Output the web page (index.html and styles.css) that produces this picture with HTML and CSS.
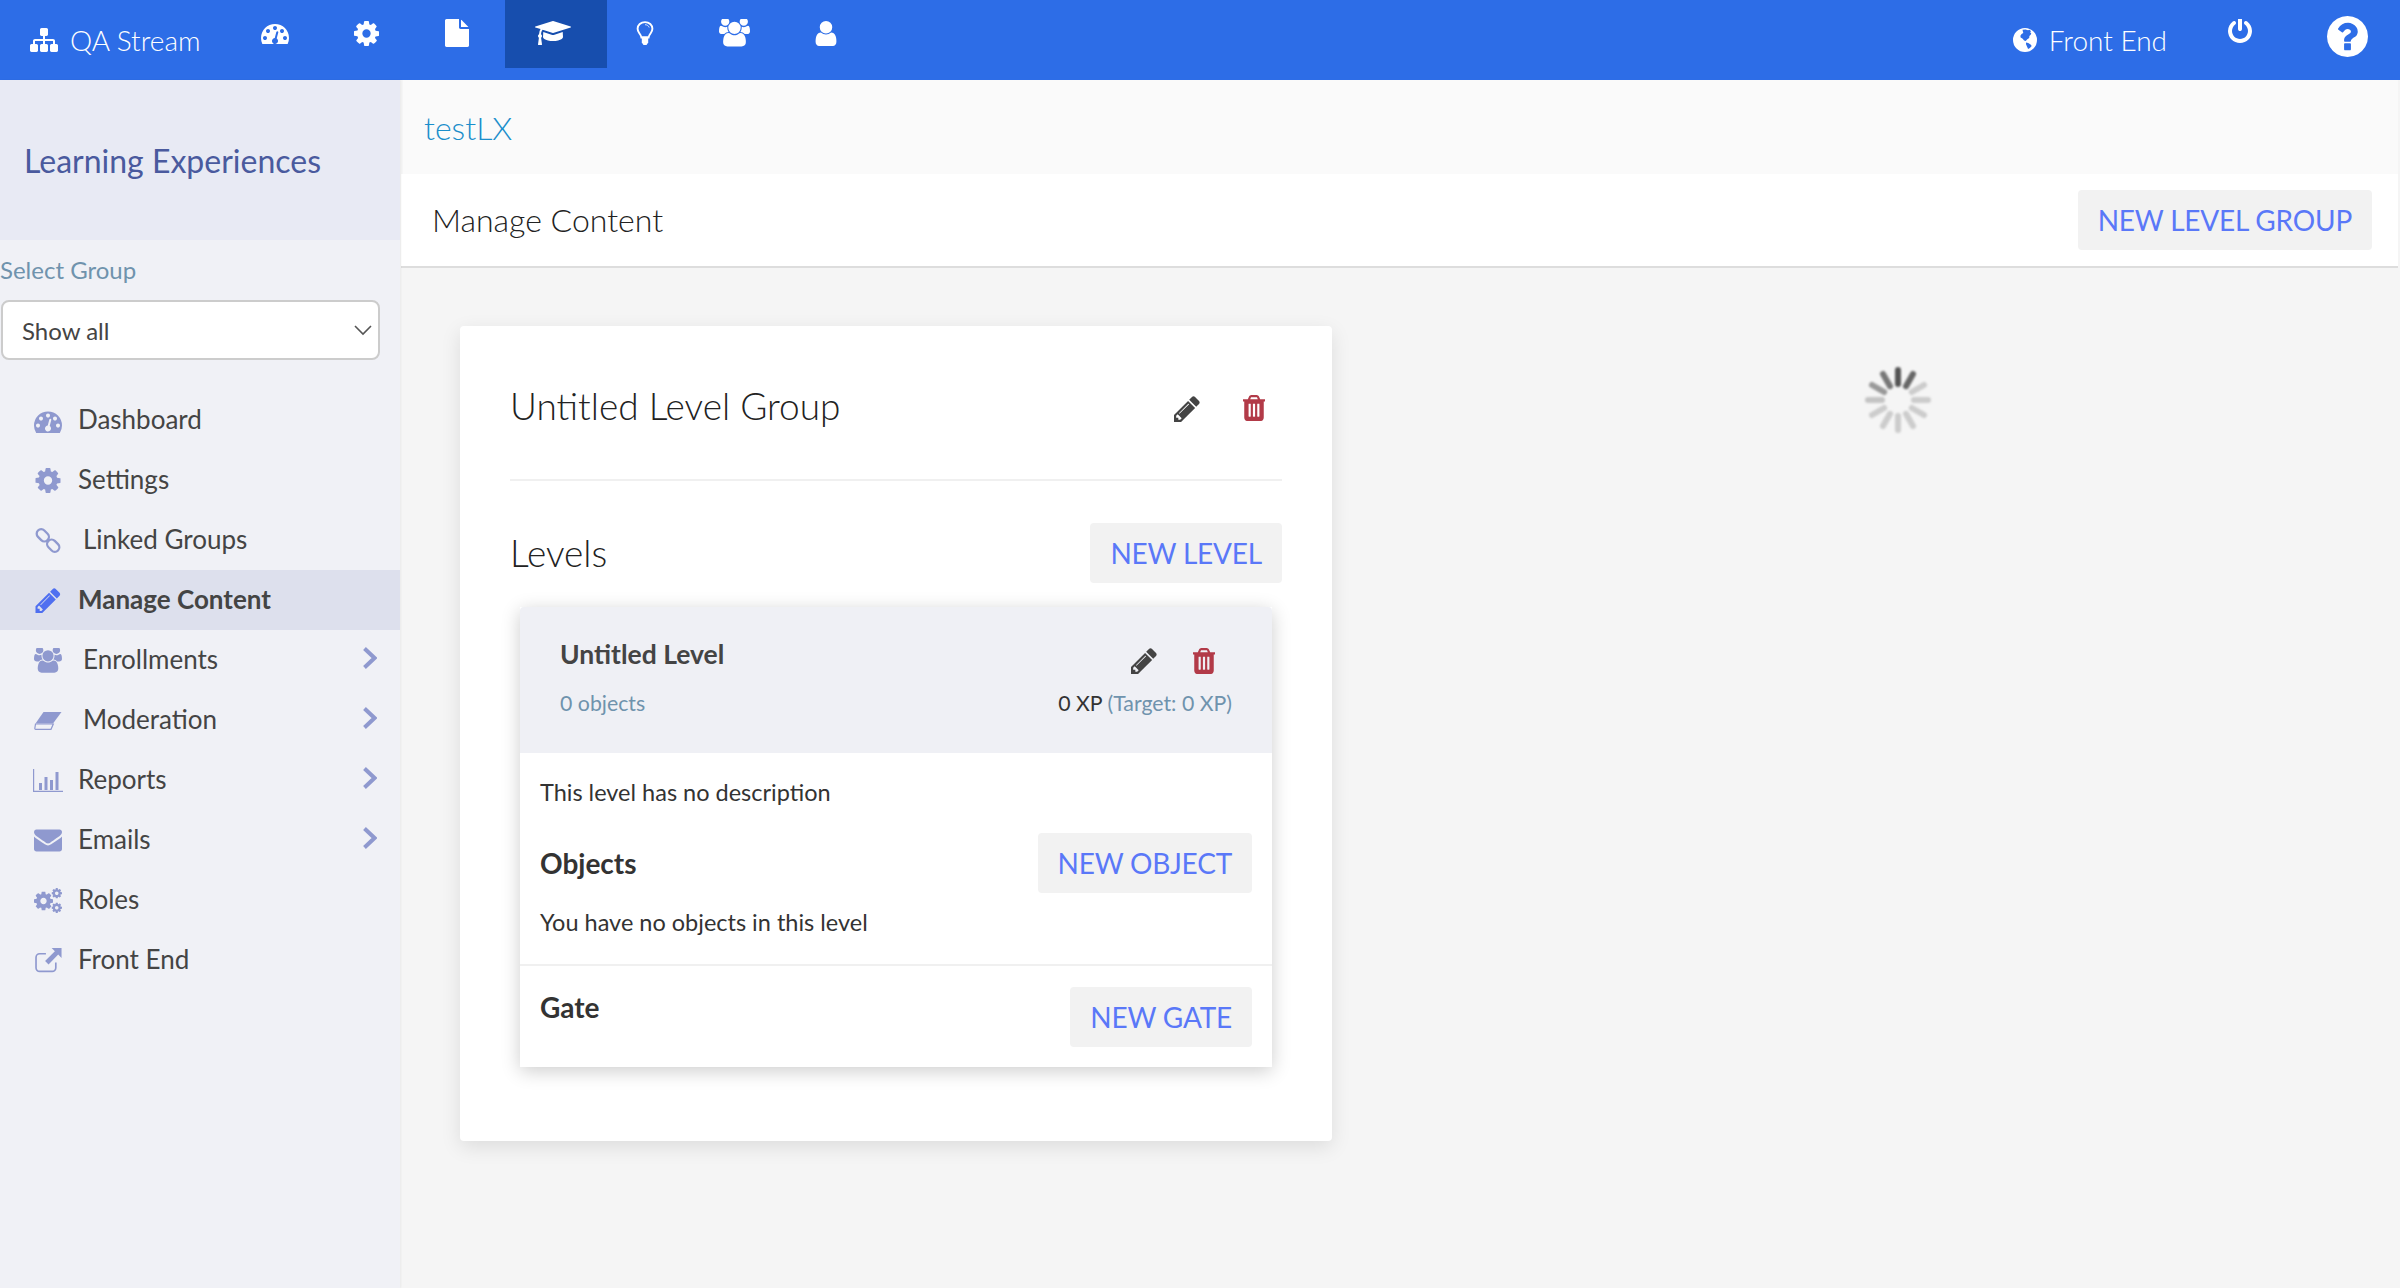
FILE: index.html
```html
<!DOCTYPE html>
<html lang="en">
<head>
    <meta charset="UTF-8">
    <title>Manage Content</title>
    <link rel="stylesheet" href="styles.css">
</head>
<body>
    <!-- Icon sprite -->
    <svg class="sprite" xmlns="http://www.w3.org/2000/svg">
        <symbol id="i-sitemap" viewBox="0 0 1792 1792"><path d="M1792 1248v320q0 40-28 68t-68 28h-320q-40 0-68-28t-28-68v-320q0-40 28-68t68-28h96v-192h-512v192h96q40 0 68 28t28 68v320q0 40-28 68t-68 28h-320q-40 0-68-28t-28-68v-320q0-40 28-68t68-28h96v-192h-512v192h96q40 0 68 28t28 68v320q0 40-28 68t-68 28h-320q-40 0-68-28t-28-68v-320q0-40 28-68t68-28h96v-192q0-52 38-90t90-38h512v-192h-96q-40 0-68-28t-28-68v-320q0-40 28-68t68-28h320q40 0 68 28t28 68v320q0 40-28 68t-68 28h-96v192h512q52 0 90 38t38 90v192h96q40 0 68 28t28 68z"/></symbol>
        <symbol id="i-dashboard" viewBox="0 128 1792 1408"><path fill-rule="evenodd" d="M384 1152q0-53-37.5-90.5t-90.5-37.5-90.5 37.5-37.5 90.5 37.5 90.5 90.5 37.5 90.5-37.5 37.5-90.5zm192-448q0-53-37.5-90.5t-90.5-37.5-90.5 37.5-37.5 90.5 37.5 90.5 90.5 37.5 90.5-37.5 37.5-90.5zm428 481l101-382q6-26-7.5-48.5t-38.5-29.5-48 6.5-30 39.5l-101 382q-60 5-107 43.5t-63 98.5q-20 77 20 146t117 89 146-20 89-117q16-60-6-117t-72-91zm660-33q0-53-37.5-90.5t-90.5-37.5-90.5 37.5-37.5 90.5 37.5 90.5 90.5 37.5 90.5-37.5 37.5-90.5zm-640-640q0-53-37.5-90.5t-90.5-37.5-90.5 37.5-37.5 90.5 37.5 90.5 90.5 37.5 90.5-37.5 37.5-90.5zm448 192q0-53-37.5-90.5t-90.5-37.5-90.5 37.5-37.5 90.5 37.5 90.5 90.5 37.5 90.5-37.5 37.5-90.5zm320 448q0 261-141 483-19 29-54 29h-1402q-35 0-54-29-141-221-141-483 0-182 71-348t191-286 286-191 348-71 348 71 286 191 191 286 71 348z"/></symbol>
        <symbol id="i-cog" viewBox="128 128 1536 1536"><path d="M1152 896q0-106-75-181t-181-75-181 75-75 181 75 181 181 75 181-75 75-181zm512-109v222q0 12-8 23t-20 13l-185 28q-19 54-39 91 35 50 107 138 10 12 10 25t-9 23q-27 37-99 108t-94 71q-12 0-26-9l-138-108q-44 23-91 38-16 136-29 186-7 28-36 28h-222q-14 0-24.5-8.5t-11.5-21.5l-28-184q-49-16-90-37l-141 107q-10 9-25 9-14 0-25-11-126-114-165-168-7-10-7-23 0-12 8-23 15-21 51-66.5t54-70.5q-27-50-41-99l-183-27q-13-2-21-12.5t-8-23.5v-222q0-12 8-23t19-13l186-28q14-46 39-92-40-57-107-138-10-12-10-24 0-10 9-23 26-36 98.5-107.5t94.5-71.5q13 0 26 10l138 107q44-23 91-38 16-136 29-186 7-28 36-28h222q14 0 24.5 8.5t11.5 21.5l28 184q49 16 90 37l142-107q9-9 24-9 13 0 25 10 129 119 165 170 7 8 7 22 0 12-8 23-15 21-51 66.5t-54 70.5q26 50 41 98l183 28q13 2 21 12.5t8 23.5z"/></symbol>
        <symbol id="i-file" viewBox="128 0 1536 1792"><path d="M1152 512v-472q22 14 36 28l408 408q14 14 28 36h-472zm-128 32q0 40 28 68t68 28h544v1056q0 40-28 68t-68 28h-1344q-40 0-68-28t-28-68v-1600q0-40 28-68t68-28h800v544z"/></symbol>
        <symbol id="i-cap" viewBox="0 128 2304 1536"><path d="M1774 836l18 316q4 69-82 128t-235 93.5-323 34.5-323-34.5-235-93.5-82-128l18-316 574 181q22 7 48 7t48-7zm530-324q0 23-22 31l-1120 352q-4 1-10 1t-10-1l-652-206q-43 34-71 111.5t-34 178.5q63 36 63 109 0 69-58 107l58 433q2 14-8 25-9 11-24 11h-192q-15 0-24-11-10-11-8-25l58-433q-58-38-58-107 0-73 65-111 11-207 98-330l-333-104q-22-8-22-31t22-31l1120-352q4-1 10-1t10 1l1120 352q22 8 22 31z"/></symbol>
        <symbol id="i-bulb" viewBox="0 0 18 24"><path d="M9 1.100c-4.200 0-7.400 3-7.400 6.700 0 1.900.8 3.200 1.700 4.400.9 1.200 1.900 2.500 2.100 4.300h7.200c.2-1.800 1.200-3.100 2.100-4.300.9-1.200 1.700-2.500 1.700-4.400 0-3.700-3.200-6.700-7.400-6.700z" fill="none" stroke="currentColor" stroke-width="1.900"/><path d="M5.800 15.500h6.400v6l-1.700 2.400h-3l-1.700-2.400z"/><path d="M9 3.700c2 0 3.700 1.200 4.200 2.800" fill="none" stroke="currentColor" stroke-width=".8"/></symbol>
        <symbol id="i-users" viewBox="0 128 1920 1664"><path d="M593 896q-162 5-265 128h-134q-82 0-138-40.500t-56-118.500q0-353 124-353 6 0 43.500 21t97.500 42.500 119 21.500q67 0 133-23-5 37-5 66 0 139 81 256zm1071 637q0 120-73 189.500t-194 69.500h-874q-121 0-194-69.500t-73-189.500q0-53 3.500-103.500t14-109 26.500-108.500 43-97.500 62-81 85.500-53.500 111.500-20q10 0 43 21.500t73 48 107 48 135 21.500 135-21.500 107-48 73-48 43-21.500q61 0 111.500 20t85.500 53.500 62 81 43 97.500 26.500 108.500 14 109 3.500 103.500zm-1024-1277q0 106-75 181t-181 75-181-75-75-181 75-181 181-75 181 75 75 181zm704 384q0 159-112.500 271.500t-271.500 112.500-271.500-112.500-112.500-271.500 112.500-271.500 271.500-112.500 271.500 112.500 112.500 271.500zm576 225q0 78-56 118.500t-138 40.500h-134q-103-123-265-128 81-117 81-256 0-29-5-66 66 23 133 23 59 0 119-21.500t97.500-42.500 43.500-21q124 0 124 353zm-128-609q0 106-75 181t-181 75-181-75-75-181 75-181 181-75 181 75 75 181z"/></symbol>
        <symbol id="i-user" viewBox="256 128 1280 1536"><path d="M1536 1399q0 109-62.500 187t-150.500 78h-854q-88 0-150.500-78t-62.500-187q0-85 8.500-160.500t31.500-152 58.500-131 94-89 134.500-34.500q131 128 313 128t313-128q76 0 134.500 34.500t94 89 58.500 131 31.500 152 8.500 160.500zm-256-887q0 159-112.500 271.500t-271.500 112.500-271.500-112.500-112.500-271.500 112.500-271.500 271.500-112.500 271.500 112.500 112.500 271.500z"/></symbol>
        <symbol id="i-globe" viewBox="0 0 24 24"><path fill-rule="evenodd" d="M12 0a12 12 0 1 0 0 24 12 12 0 0 0 0-24zM9.500 1.800l3-.3 2.500.8 1.500-.6 1.600 1.500-1.200 1 1.400.7-.6 1.800-1.300 1.200-.2 2.200-1.900 1.100-1.600 1.800-1.600-.5-1.700-2-1.800-1.100-.2-1.700 1.200-1.800 1.700-.8-.4-1.700zM13 14.500l2.200.4 2.400 1.500 1.100 1.700-1.800 2-1.800.9-1-2.200-1.100-2.500z"/></symbol>
        <symbol id="i-power" viewBox="128 128 1536 1664"><path d="M1664 896q0 156-61 298t-164 245-245 164-298 61-298-61-245-164-164-245-61-298q0-182 80.500-343t226.500-270q43-32 95.500-25t83.500 50q32 42 24.500 94.500t-49.500 84.500q-98 74-151.500 181t-53.500 228q0 104 40.500 198.500t109.500 163.500 163.500 109.500 198.500 40.500 198.500-40.500 163.500-109.500 109.500-163.500 40.500-198.500q0-121-53.500-228t-151.500-181q-42-32-49.500-84.500t24.500-94.500q31-43 84-50t95 25q146 109 226.500 270t80.500 343zm-640-768v640q0 52-38 90t-90 38-90-38-38-90v-640q0-52 38-90t90-38 90 38 38 90z"/></symbol>
        <symbol id="i-help" viewBox="128 128 1536 1536"><path d="M1024 1376v-192q0-14-9-23t-23-9h-192q-14 0-23 9t-9 23v192q0 14 9 23t23 9h192q14 0 23-9t9-23zm256-672q0-88-55.500-163t-138.500-116-170-41q-243 0-371 213-15 24 8 42l132 100q7 6 19 6 16 0 25-12 53-68 86-92 34-24 86-24 48 0 85.500 26t37.500 59q0 38-20 61t-68 45q-63 28-115.500 86.500t-52.500 125.500v36q0 14 9 23t23 9h192q14 0 23-9t9-23q0-19 21.500-49.500t54.500-49.500q32-18 49-28.500t46-35 44.500-48 28-60.500 12.500-81zm384 192q0 209-103 385.500t-279.500 279.500-385.500 103-385.500-103-279.500-279.500-103-385.500 103-385.500 279.500-279.500 385.500-103 385.500 103 279.500 279.500 103 385.500z"/></symbol>
        <symbol id="i-pencil" viewBox="128 128 1536 1536"><path d="M491 1536l91-91-235-235-91 91v107h128v128h107zm523-928q0-22-22-22-10 0-17 7l-542 542q-7 7-7 17 0 22 22 22 10 0 17-7l542-542q7-7 7-17zm-54-192l416 416-832 832h-416v-416zm683 96q0 53-37 90l-166 166-416-416 166-165q36-38 90-38 53 0 91 38l235 234q37 39 37 91z"/></symbol>
        <symbol id="i-trash" viewBox="256 128 1280 1536"><path d="M704 1376v-704q0-14-9-23t-23-9h-64q-14 0-23 9t-9 23v704q0 14 9 23t23 9h64q14 0 23-9t9-23zm256 0v-704q0-14-9-23t-23-9h-64q-14 0-23 9t-9 23v704q0 14 9 23t23 9h64q14 0 23-9t9-23zm256 0v-704q0-14-9-23t-23-9h-64q-14 0-23 9t-9 23v704q0 14 9 23t23 9h64q14 0 23-9t9-23zm-544-992h448l-48-117q-7-9-17-11h-317q-10 2-17 11zm928 32v64q0 14-9 23t-23 9h-96v948q0 83-47 143.500t-113 60.500h-832q-66 0-113-58.500t-47-141.500v-952h-96q-14 0-23-9t-9-23v-64q0-14 9-23t23-9h309l70-167q15-37 54-63t79-26h320q40 0 79 26t54 63l70 167h309q14 0 23 9t9 23z"/></symbol>
        <symbol id="i-link" viewBox="0 0 24 24"><g fill="none" stroke="currentColor" stroke-width="2.200"><rect x="0.500" y="2.700" width="13" height="8.600" rx="4.300" transform="rotate(45 7 7)"/><rect x="10.500" y="12.700" width="13" height="8.600" rx="4.300" transform="rotate(45 17 17)"/></g></symbol>
        <symbol id="i-eraser" viewBox="0 0 28 19"><path d="M9.500 1H27.500L19 12.500H1.500z"/><path d="M1.500 13l-.7 4.500c0 .5.300.8.800.8H17l2.300-5.300z" fill="none" stroke="currentColor" stroke-width="1.200"/></symbol>
        <symbol id="i-chart" viewBox="0 0 30 23"><path d="M.6 0v22.300H30" fill="none" stroke="currentColor" stroke-width="1.200"/><path d="M6 14h3v7H6zM11.500 8h3v13h-3zM17 11h3v10h-3zM22.500 3h3v18h-3z"/></symbol>
        <symbol id="i-envelope" viewBox="0 256 1792 1408"><path d="M1792 710v794q0 66-47 113t-113 47h-1472q-66 0-113-47t-47-113v-794q44 49 101 87 362 246 497 345 57 42 92.500 65.500t94.500 48 110 24.500h2q51 0 110-24.500t94.500-48 92.500-65.500q170-123 498-345 57-39 100-87zm0-294q0 79-49 151t-122 123q-376 261-468 325-10 7-42.500 30.500t-54 38-52 32.500-57.500 27-50 9h-2q-23 0-50-9t-57.500-27-52-32.500-54-38-42.500-30.500q-91-64-262-182.500t-205-142.500q-62-42-117-115.500t-55-136.500q0-78 41.500-130t118.500-52h1472q65 0 112.500 47t47.500 113z"/></symbol>
        <symbol id="i-external" viewBox="0 0 26 24"><path d="M11 5.500H5a3.500 3.500 0 0 0-3.500 3.500v10A3.500 3.500 0 0 0 5 22.500h12a3.500 3.500 0 0 0 3.500-3.500v-5" fill="none" stroke="currentColor" stroke-width="1.600"/><path d="M16.500 0H26v9.500l-3.200-3.200-9.300 9.500-3.300-3.300 9.400-9.300z"/></symbol>
        <symbol id="i-chevron" viewBox="0 0 15 24"><path d="M2.500 2.500L12.500 12 2.500 21.500" fill="none" stroke="currentColor" stroke-width="4"/></symbol>
    </svg>

    <header class="topbar">
        <a class="brand">
            <svg class="ic-brand"><use href="#i-sitemap"/></svg>
            <span>QA Stream</span>
        </a>
        <nav class="topnav">
            <a class="topnav-item w91"><svg class="ic-dash"><use href="#i-dashboard"/></svg></a>
            <a class="topnav-item w91"><svg class="ic-gear"><use href="#i-cog"/></svg></a>
            <a class="topnav-item w93"><svg class="ic-file"><use href="#i-file"/></svg></a>
            <a class="topnav-item active"><svg class="ic-cap"><use href="#i-cap"/></svg></a>
            <a class="topnav-item w83"><svg class="ic-bulb"><use href="#i-bulb"/></svg></a>
            <a class="topnav-item w90"><svg class="ic-users"><use href="#i-users"/></svg></a>
            <a class="topnav-item w90"><svg class="ic-user"><use href="#i-user"/></svg></a>
        </nav>
        <div class="topbar-right">
            <a class="front-end">
                <svg class="ic-globe"><use href="#i-globe"/></svg>
                <span>Front End</span>
            </a>
            <svg class="ic-power"><use href="#i-power"/></svg>
            <svg class="ic-help"><use href="#i-help"/></svg>
        </div>
    </header>

    <div class="layout">
        <aside class="sidebar">
            <div class="sidebar-head">
                <h2>Learning Experiences</h2>
            </div>
            <div class="group-select">
                <label>Select Group</label>
                <div class="select-box">
                    <span>Show all</span>
                    <svg class="select-arrow" viewBox="0 0 20 12"><path d="M2 2l8 8 8-8" fill="none" stroke="#555" stroke-width="1.600"/></svg>
                </div>
            </div>
            <ul class="menu">
                <li><svg class="menu-icon"><use href="#i-dashboard"/></svg><span>Dashboard</span></li>
                <li><svg class="menu-icon"><use href="#i-cog"/></svg><span>Settings</span></li>
                <li class="wide"><svg class="menu-icon"><use href="#i-link"/></svg><span>Linked Groups</span></li>
                <li class="current"><svg class="menu-icon"><use href="#i-pencil"/></svg><span>Manage Content</span></li>
                <li class="wide"><svg class="menu-icon"><use href="#i-users"/></svg><span>Enrollments</span><svg class="menu-arrow"><use href="#i-chevron"/></svg></li>
                <li class="wide"><svg class="menu-icon"><use href="#i-eraser"/></svg><span>Moderation</span><svg class="menu-arrow"><use href="#i-chevron"/></svg></li>
                <li><svg class="menu-icon wider"><use href="#i-chart"/></svg><span>Reports</span><svg class="menu-arrow"><use href="#i-chevron"/></svg></li>
                <li><svg class="menu-icon"><use href="#i-envelope"/></svg><span>Emails</span><svg class="menu-arrow"><use href="#i-chevron"/></svg></li>
                <li>
                    <svg class="menu-icon" viewBox="0 0 28 25">
                        <use href="#i-cog" x="0" y="3.500" width="19" height="19"/>
                        <use href="#i-cog" x="17.500" y="0" width="10.500" height="10.500"/>
                        <use href="#i-cog" x="17.500" y="14.500" width="10.500" height="10.500"/>
                    </svg>
                    <span>Roles</span>
                </li>
                <li><svg class="menu-icon"><use href="#i-external"/></svg><span>Front End</span></li>
            </ul>
        </aside>

        <main class="main">
            <div class="breadcrumb"><a>testLX</a></div>
            <div class="page-head">
                <h1>Manage Content</h1>
                <button class="btn">NEW LEVEL GROUP</button>
            </div>

            <div class="content">
                <section class="group-card">
                    <div class="group-title">
                        <h2>Untitled Level Group</h2>
                        <svg class="ic-edit"><use href="#i-pencil"/></svg>
                        <svg class="ic-delete"><use href="#i-trash"/></svg>
                    </div>
                    <hr>
                    <div class="levels-head">
                        <h3>Levels</h3>
                        <button class="btn">NEW LEVEL</button>
                    </div>

                    <div class="level-card">
                        <div class="level-head">
                            <div class="level-row">
                                <strong>Untitled Level</strong>
                                <div class="level-actions">
                                    <svg class="ic-edit"><use href="#i-pencil"/></svg>
                                    <svg class="ic-delete"><use href="#i-trash"/></svg>
                                </div>
                            </div>
                            <div class="level-row level-meta">
                                <span class="muted">0 objects</span>
                                <span>0 XP <span class="muted">(Target: 0 XP)</span></span>
                            </div>
                        </div>
                        <div class="level-body">
                            <p class="desc">This level has no description</p>
                            <div class="objects-head">
                                <h4>Objects</h4>
                                <button class="btn">NEW OBJECT</button>
                            </div>
                            <p class="no-objects">You have no objects in this level</p>
                        </div>
                        <div class="level-gate">
                            <h4>Gate</h4>
                            <button class="btn">NEW GATE</button>
                        </div>
                    </div>
                </section>

                <svg class="spinner" viewBox="-36 -36 72 72">
                    <g stroke-width="6" stroke-linecap="round">
                        <line y1="-16" y2="-30" stroke="#555"/>
                        <line y1="-16" y2="-30" stroke="#666" transform="rotate(30)"/>
                        <line y1="-16" y2="-30" stroke="#ccc" transform="rotate(60)"/>
                        <line y1="-16" y2="-30" stroke="#ccc" transform="rotate(90)"/>
                        <line y1="-16" y2="-30" stroke="#ccc" transform="rotate(120)"/>
                        <line y1="-16" y2="-30" stroke="#ccc" transform="rotate(150)"/>
                        <line y1="-16" y2="-30" stroke="#ccc" transform="rotate(180)"/>
                        <line y1="-16" y2="-30" stroke="#ccc" transform="rotate(210)"/>
                        <line y1="-16" y2="-30" stroke="#ccc" transform="rotate(240)"/>
                        <line y1="-16" y2="-30" stroke="#c4c4c4" transform="rotate(270)"/>
                        <line y1="-16" y2="-30" stroke="#999" transform="rotate(300)"/>
                        <line y1="-16" y2="-30" stroke="#777" transform="rotate(330)"/>
                    </g>
                </svg>
            </div>
        </main>
    </div>
</body>
</html>
```

FILE: styles.css
```css
/* General Styling */
* {
    box-sizing: border-box;
}

html, body {
    height: 100%;
}

body {
    margin: 0;
    overflow: hidden;
    font-family: Lato, "Open Sans", sans-serif;
    background-color: #f5f5f5;
    color: #333;
}

h1, h2, h3, h4, p, ul {
    margin: 0;
    padding: 0;
}

svg {
    fill: currentColor;
    display: block;
}

.sprite {
    display: none;
}

/* Top bar */
.topbar {
    display: flex;
    align-items: flex-start;
    height: 80px;
    background-color: #2d6de7;
    color: #fff;
}

.brand {
    display: flex;
    align-items: center;
    width: 230px;
    height: 80px;
    padding-left: 30px;
    gap: 12px;
    font-size: 28px;
    font-weight: 300;
}

.ic-brand { width: 28px; height: 28px; }

.topnav {
    display: flex;
}

.topnav-item {
    display: flex;
    align-items: center;
    justify-content: center;
    width: 102px;
    height: 68px;
    padding-bottom: 2px;
}

.topnav-item.active { background-color: #174eae; }
.w83 { width: 83px; }
.w90 { width: 90px; }
.w91 { width: 91px; }
.w93 { width: 93px; }

.ic-dash { width: 28px; height: 22px; margin-right: 2px; }
.ic-gear { width: 25px; height: 25px; }
.ic-file { width: 24px; height: 28px; margin-right: 4px; }
.ic-cap { width: 36px; height: 24px; margin-right: 6px; }
.ic-bulb { width: 18px; height: 24px; margin-right: 8px; }
.ic-users { width: 31px; height: 28px; margin-right: 2px; }
.ic-user { width: 22px; height: 25px; margin-left: 2px; }

.topbar-right {
    display: flex;
    align-items: flex-start;
    margin-left: auto;
    padding-right: 32px;
}

.front-end {
    display: flex;
    align-items: center;
    gap: 12px;
    height: 80px;
    font-size: 28px;
    font-weight: 300;
}

.ic-globe { width: 24px; height: 24px; }
.ic-power { width: 24px; height: 26px; margin: 19px 75px 0 61px; }
.ic-help { width: 41px; height: 41px; margin-top: 16px; }

.layout {
    display: flex;
    height: 1208px;
}

/* Sidebar */
.sidebar {
    position: relative;
    z-index: 1;
    flex: 0 0 400px;
    background-color: #f0f1f6;
    box-shadow: 1px 0 2px rgba(0, 0, 0, 0.05);
}

.sidebar-head {
    display: flex;
    align-items: center;
    height: 160px;
    padding-left: 24px;
    background-color: #e8eaf4;
}

.sidebar-head h2 {
    font-size: 32px;
    font-weight: 400;
    color: #4a5a9e;
}

.group-select {
    padding: 15px 20px 0 1px;
}

.group-select label {
    display: block;
    margin-left: -1px;
    font-size: 24px;
    line-height: 30px;
    color: #6f93ad;
}

.select-box {
    display: flex;
    align-items: center;
    justify-content: space-between;
    height: 60px;
    margin-top: 15px;
    padding: 0 5px 0 19px;
    background-color: #fff;
    border: 2px solid #ccc;
    border-radius: 8px;
    font-size: 24px;
    color: #444;
}

.select-arrow { width: 20px; height: 12px; }

.menu {
    margin-top: 30px;
    list-style: none;
}

.menu li {
    display: flex;
    align-items: center;
    height: 60px;
    padding: 0 23px 0 34px;
    font-size: 26px;
    color: #444;
}

.menu li span {
    margin-top: -2px;
}

.menu li.current {
    background-color: #dde0ed;
    font-weight: 700;
}

.menu-icon {
    flex: 0 0 28px;
    width: 28px;
    height: 25px;
    margin-right: 16px;
    color: #8f99cf;
}

.menu-icon.wider {
    flex-basis: 30px;
    width: 30px;
    margin: 0 15px 0 -1px;
}

.menu li.wide .menu-icon { margin-right: 21px; }
.menu li.current .menu-icon { color: #4f6ff0; }

.menu-arrow {
    width: 15px;
    height: 24px;
    margin: -4px 0 0 auto;
    color: #8f99cf;
}

/* Main area */
.main {
    flex: 1;
    padding-left: 1px;
    padding-right: 2px;
}

.breadcrumb {
    display: flex;
    align-items: center;
    height: 94px;
    margin-left: 2px;
    padding-left: 21px;
    background-color: #fafafa;
    font-size: 32px;
    font-weight: 300;
    color: #1a8ecb;
}

.page-head {
    display: flex;
    align-items: center;
    justify-content: space-between;
    height: 94px;
    padding: 0 26px 0 31px;
    background-color: #fff;
    border-bottom: 2px solid #ddd;
}

.page-head h1 {
    margin-top: -2px;
    font-size: 32px;
    font-weight: 300;
    color: #222;
}

.btn {
    height: 60px;
    padding: 0 20px;
    background-color: #f2f2f2;
    border: none;
    border-radius: 4px;
    font-family: inherit;
    font-size: 28px;
    letter-spacing: -0.2px;
    color: #5a78f8;
}

.content {
    position: relative;
    padding: 58px 0 0 59px;
}

.spinner {
    position: absolute;
    left: 1461px;
    top: 96px;
    width: 72px;
    height: 72px;
    filter: blur(1.2px);
}

/* Level group card */
.group-card {
    width: 872px;
    padding: 50px 50px 74px;
    background-color: #fff;
    border-radius: 4px;
    box-shadow: 0 6px 20px rgba(0, 0, 0, 0.1);
}

.group-title {
    display: flex;
    align-items: center;
    height: 62px;
}

.group-title h2 {
    flex: 1;
    font-size: 37px;
    font-weight: 300;
    margin-top: -3px;
    color: #222;
}

.ic-edit { width: 26px; height: 26px; color: #444; }
.ic-delete { width: 22px; height: 26px; color: #b23a48; }

.group-title svg { margin-top: 4px; }
.group-title .ic-delete { margin: 2px 17px 0 43px; }

.group-card hr {
    height: 2px;
    margin: 41px 0 0;
    background-color: #f0f0f0;
    border: none;
}

.levels-head {
    display: flex;
    align-items: center;
    justify-content: space-between;
    margin-top: 42px;
}

.levels-head h3 {
    margin-top: -2px;
    font-size: 37px;
    font-weight: 300;
    color: #222;
}

/* Level card */
.level-card {
    margin: 24px 10px 0;
    background-color: #fff;
    box-shadow: 0 4px 18px rgba(0, 0, 0, 0.2);
}

.level-head {
    padding: 30px 40px 33px;
    background-color: #eff0f5;
    border-radius: 4px 4px 0 0;
}

.level-row {
    display: flex;
    align-items: center;
    justify-content: space-between;
    height: 36px;
    font-size: 26.5px;
}

.level-row strong {
    margin-top: -2px;
    color: #444;
}

.level-actions {
    display: flex;
    gap: 36px;
    margin: 12px 17px 0 0;
}

.level-meta {
    height: 26px;
    margin-top: 17px;
    margin-bottom: 4px;
    font-size: 21.3px;
}

.muted {
    color: #6f93ad;
}

.level-body {
    padding: 25px 20px 26px;
    font-size: 23.5px;
}

.desc, .no-objects {
    line-height: 28px;
}

.objects-head {
    display: flex;
    align-items: center;
    justify-content: space-between;
    margin-top: 27px;
}

.no-objects {
    margin-top: 15px;
    margin-bottom: 2px;
}

.level-gate {
    display: flex;
    align-items: flex-start;
    justify-content: space-between;
    padding: 21px 20px 20px;
    border-top: 2px solid #f0f0f0;
}

h4 {
    font-size: 28px;
    font-weight: 700;
    line-height: 40px;
}
```
